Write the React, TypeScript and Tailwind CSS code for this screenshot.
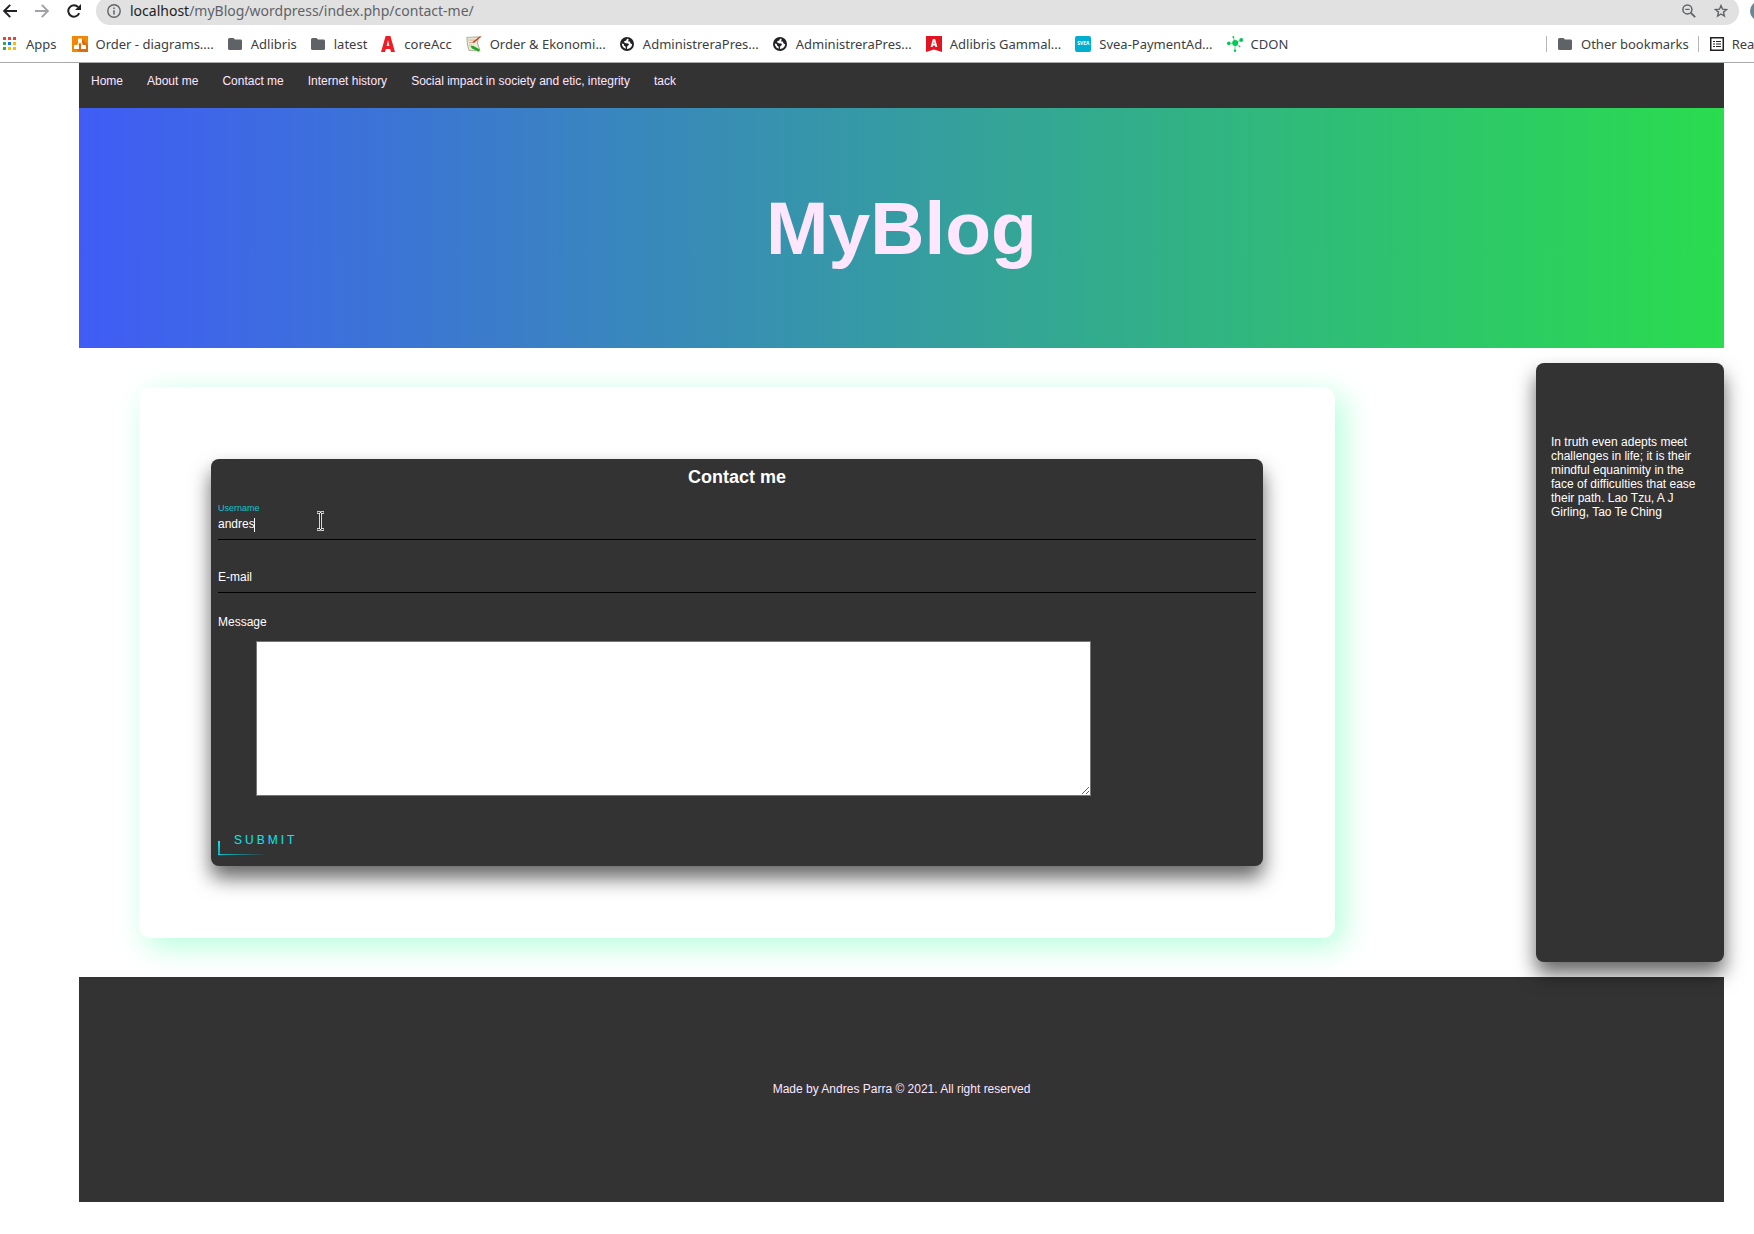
import type { ReactNode } from "react";

const ink = "#5f6368";

function Folder() {
  return (
    <svg width="14" height="12" viewBox="0 0 14 12" fill={ink}>
      <path d="M1.5 0H5.5L7 1.6H12.5A1.5 1.5 0 0 1 14 3V10.5A1.5 1.5 0 0 1 12.5 12H1.5A1.5 1.5 0 0 1 0 10.5V1.5A1.5 1.5 0 0 1 1.5 0Z" />
    </svg>
  );
}

function AppsGrid() {
  const colors = ["#ea4335", "#ea4335", "#ea4335", "#34a853", "#1a73e8", "#fbbc04", "#34a853", "#fbbc04", "#fbbc04"];
  return (
    <svg width="14" height="14" viewBox="0 0 14 14" shapeRendering="crispEdges">
      {colors.map((c, i) => (
        <rect key={i} x={(i % 3) * 5} y={Math.floor(i / 3) * 5} width="3" height="3" fill={c} />
      ))}
    </svg>
  );
}

function Diagrams() {
  return (
    <svg width="16" height="16" viewBox="0 0 16 16">
      <rect width="16" height="16" fill="#f08705" />
      <path d="M10 3L16 9V16H8L3 12Z" fill="#df6c0c" />
      <path d="M8 5L4.5 11M8 5L11.5 11" stroke="#fff" strokeWidth="1.3" />
      <rect x="6" y="2.4" width="4" height="4" rx=".6" fill="#fff" />
      <rect x="2" y="9" width="5" height="4" rx=".6" fill="#fff" />
      <rect x="9" y="9" width="5" height="4" rx=".6" fill="#fff" />
    </svg>
  );
}

function RedA() {
  return (
    <svg width="14" height="16" viewBox="0 0 14 16" fill="#ee1c25" fillRule="evenodd">
      <path d="M4.6 0H9.4L14 16H10L9.2 13H4.8L4 16H0ZM7 4.2L5.6 10H8.4Z" />
    </svg>
  );
}

function Notes() {
  return (
    <svg width="16" height="16" viewBox="0 0 16 16">
      <path d="M.8 1.5L12.5.8L11.5 7L14 15L3 14.5L1.5 9Z" fill="#e9ead8" stroke="#9a9c84" strokeWidth=".8" />
      <path d="M2.5 4H9M3 6.5H7M3 9H6" stroke="#d9a98c" strokeWidth=".9" />
      <path d="M15.6.6L8.5 6.6L6.6 7.2L7.4 5.2L13.8.2Z" fill="#c8451f" />
      <path d="M4.5 10.2L7 9.8L13.8 13.4L12.6 15.6L6 12.4Z" fill="#1ea51e" />
    </svg>
  );
}

function Globe() {
  return (
    <svg width="14" height="14" viewBox="0 0 14 14">
      <circle cx="7" cy="7" r="7" fill="#202124" />
      <path
        d="M8.6 1.9C7.4 1.7 6.4 2.4 6.2 3.6L4.2 4.3C3.9 5.4 4.6 6.1 5.8 6.2L8.2 6.5C9.2 6.9 9 8 8.2 8.4L7.2 9.2L6.9 11.9C9.7 12 12 9.9 12.1 7.2L10.6 6.4L9.8 4.6H8.2ZM1.8 6.5C1.9 9 3.4 11 5.6 11.7L5.7 9.8L4 8.6L3.8 7.1Z"
        fill="#fff"
      />
    </svg>
  );
}

function RedFlag() {
  return (
    <svg width="16" height="16" viewBox="0 0 16 16">
      <path d="M0 0H16V16L8 13.6L0 16Z" fill="#e3131f" />
      <path d="M6.9 3H9.1L11.4 11H9.4L9 9.6H7L6.6 11H4.6ZM8 5.4L7.4 8H8.6Z" fill="#fff" fillRule="evenodd" />
    </svg>
  );
}

function Svea() {
  return (
    <span className="flex size-4 items-center justify-center rounded-xs bg-[#00aecf] text-[5px] leading-none font-bold text-white">
      SVEA
    </span>
  );
}

function Molecule() {
  return (
    <svg width="16" height="16" viewBox="0 0 16 16" fill="#0c5">
      <path d="M8 7L1.6 7.5M8 7L14 4M8 7L6.4 1M8 7V15M8 7L12.5 10.5" stroke="#0c5" strokeWidth=".7" />
      <circle cx="8.2" cy="7" r="3" />
      <circle cx="1.8" cy="7.4" r="1.8" />
      <circle cx="14.2" cy="4" r="1.9" />
      <circle cx="6.3" cy="1" r="1" />
      <circle cx="8" cy="14.8" r="1.2" />
      <circle cx="12.6" cy="10.4" r=".8" />
    </svg>
  );
}

function ReadingList() {
  return (
    <svg width="14" height="14" viewBox="0 0 14 14" fill="none" stroke="#202124">
      <rect x=".75" y=".75" width="12.5" height="12.5" strokeWidth="1.5" />
      <path d="M3 4.5H5M6 4.5H11M3 7H5M6 7H11M3 9.5H5M6 9.5H11" strokeWidth="1.2" />
    </svg>
  );
}

function Bookmark({ icon, gap = "gap-2", children }: { icon: ReactNode; gap?: string; children: ReactNode }) {
  return (
    <a href="#" className={"flex shrink-0 items-center whitespace-nowrap " + gap}>
      {icon}
      <span>{children}</span>
    </a>
  );
}

function BrowserBar() {
  return (
    <div className="overflow-hidden border-b border-[#a9abad] bg-white font-['Noto_Sans',sans-serif] text-[#3c4043]">
      <div className="flex h-[25px] items-start">
        <div className="flex h-[22px] shrink-0 items-center">
          <button aria-label="Back" className="ml-[3px]">
            <svg width="14" height="14" viewBox="0 0 14 14" fill="none" stroke="#202124" strokeWidth="1.9">
              <path d="M14 7H1.5M7.2 .8L1.2 7L7.2 13.2" />
            </svg>
          </button>
          <button aria-label="Forward" className="ml-[18px]">
            <svg width="14" height="14" viewBox="0 0 14 14" fill="none" stroke="#a0a2a5" strokeWidth="1.9">
              <path d="M0 7H12.5M6.8 .8L12.8 7L6.8 13.2" />
            </svg>
          </button>
          <button aria-label="Reload" className="ml-[18px]">
            <svg width="14" height="14" viewBox="0 0 14 14" fill="none" stroke="#202124" strokeWidth="2">
              <path d="M12.2 9.2A5.7 5.7 0 1 1 11.2 3.1" />
              <path d="M14 0V6H8Z" fill="#202124" stroke="none" />
            </svg>
          </button>
        </div>
        <div className="-mt-[3px] ml-[15px] flex h-7 flex-1 items-start rounded-full bg-[#e1e1e1] px-[11px] pt-[3px]">
          <div className="flex h-[22px] flex-1 items-center gap-[9px]">
            <svg width="14" height="14" viewBox="0 0 14 14" fill="none" stroke={ink}>
              <circle cx="7" cy="7" r="6.2" strokeWidth="1.4" />
              <path d="M7 6.2V10.4M7 3.4V4.9" strokeWidth="1.5" />
            </svg>
            <p className="flex-1 text-[14px] leading-5 text-[#5f6368]">
              <span className="text-[#202124]">localhost</span>/myBlog/wordpress/index.php/contact-me/
            </p>
            <button aria-label="Zoom">
              <svg width="14" height="14" viewBox="0 0 14 14" fill="none" stroke={ink}>
                <circle cx="5.4" cy="5.4" r="4.5" strokeWidth="1.5" />
                <path d="M3.2 5.4H7.6" strokeWidth="1.2" />
                <path d="M8.8 8.8L13.2 13.2" strokeWidth="1.8" />
              </svg>
            </button>
            <button aria-label="Bookmark this page" className="ml-[9px]">
              <svg width="14" height="14" viewBox="0 0 14 14" fill="none" stroke={ink} strokeWidth="1.4">
                <path d="M7 1.6L8.5 5.2L12.6 5.5L9.5 8.1L10.4 12.1L7 10L3.6 12.1L4.5 8.1L1.4 5.5L5.5 5.2Z" />
              </svg>
            </button>
          </div>
        </div>
        <div className="ml-[11px] w-1 shrink-0">
          <div className="mt-[1px] size-5 rounded-full bg-[#6d8594]" />
        </div>
      </div>
      <div className="flex h-[37px] items-center pl-[3px] text-[13px] leading-5">
        <Bookmark icon={<AppsGrid />} gap="gap-[9px]">Apps</Bookmark>
        <div className="ml-[15px] flex items-center gap-3.5">
          <Bookmark icon={<Diagrams />}>Order - diagrams....</Bookmark>
          <Bookmark icon={<Folder />} gap="gap-[9px]">Adlibris</Bookmark>
          <Bookmark icon={<Folder />} gap="gap-[9px]">latest</Bookmark>
          <Bookmark icon={<RedA />} gap="gap-[9px]">coreAcc</Bookmark>
          <Bookmark icon={<Notes />}>Order &amp; Ekonomi...</Bookmark>
          <Bookmark icon={<Globe />} gap="gap-[9px]">AdministreraPres...</Bookmark>
          <Bookmark icon={<Globe />} gap="gap-[9px]">AdministreraPres...</Bookmark>
          <Bookmark icon={<RedFlag />}>Adlibris Gammal...</Bookmark>
          <Bookmark icon={<Svea />}>Svea-PaymentAd...</Bookmark>
          <Bookmark icon={<Molecule />}>CDON</Bookmark>
        </div>
        <div className="ml-auto flex w-[208px] shrink-0 items-center">
          <div className="h-4 w-px shrink-0 bg-[#b4b6b8]" />
          <div className="ml-[11px]">
            <Bookmark icon={<Folder />} gap="gap-[9px]">Other bookmarks</Bookmark>
          </div>
          <div className="ml-[9px] h-4 w-px shrink-0 bg-[#b4b6b8]" />
          <div className="ml-[11px]">
            <Bookmark icon={<ReadingList />} gap="gap-2">Rea</Bookmark>
          </div>
        </div>
      </div>
    </div>
  );
}

const navItems = ["Home", "About me", "Contact me", "Internet history", "Social impact in society and etic, integrity", "tack"];

function Field({ id, label, value, active, type }: { id: string; label: string; value?: string; active?: boolean; type: string }) {
  return (
    <div className="relative">
      <input
        id={id}
        type={type}
        defaultValue={value}
        className="mb-[22px] block h-[31px] w-full border-b border-black bg-transparent text-[12px] text-white outline-none"
      />
      <label
        htmlFor={id}
        className={
          active
            ? "absolute -top-[9px] left-0 text-[9px] leading-4 text-[#03e9f4]/80"
            : "absolute top-[5px] left-0 text-[12px] leading-5"
        }
      >
        {label}
      </label>
      {active && (
        <>
          <span className="absolute top-[9px] left-9 h-3.5 w-px bg-white" />
          <svg className="absolute top-px left-[98px]" width="9" height="22" viewBox="0 0 9 22" fill="none">
            <path d="M1 2.5H3.5L4.5 3.5L5.5 2.5H8M4.5 3V19M1 19.5H3.5L4.5 18.5L5.5 19.5H8" stroke="#fff" strokeWidth="2.6" />
            <path d="M1.5 2.5H3.5L4.5 3.5L5.5 2.5H7.5M4.5 3V19M1.5 19.5H3.5L4.5 18.5L5.5 19.5H7.5" stroke="#222" strokeWidth="1" />
          </svg>
        </>
      )}
    </div>
  );
}

export default function App() {
  return (
    <div className="min-h-screen overflow-x-hidden bg-white font-['Liberation_Sans',sans-serif] text-[12px] leading-[14px] text-white">
      <BrowserBar />
      <div className="mr-[30px] ml-[79px]">
        <nav className="h-[45px] bg-[#333]">
          <ul className="flex gap-6 px-3 pt-[11px]">
            {navItems.map((item) => (
              <li key={item}>
                <a href="#" className="text-[#ffe6ff]">{item}</a>
              </li>
            ))}
          </ul>
        </nav>
        <header className="flex h-[240px] items-center justify-center bg-[linear-gradient(90deg,#405cf5,#2adc4e)]">
          <h1 className="text-[75px] leading-[86px] font-bold text-[#ffe6ff]">MyBlog</h1>
        </header>
        <div className="flex items-start">
          <main className="mt-[39px] mr-[201px] mb-[39px] ml-[60px] flex-1 rounded-xl bg-white p-18 shadow-[8px_8px_30px_#b1ffdb]">
            <form className="rounded-lg bg-[#333] px-[7px] pt-[9px] pb-[11px] shadow-[0_12px_20px_rgba(0,0,0,0.6)]">
              <h2 className="mb-[21px] text-center text-[18px] leading-[18px] font-bold">Contact me</h2>
              <div className="pt-0.5">
                <Field id="username" type="text" label="Username" value="andres" active />
                <Field id="email" type="email" label="E-mail" />
              </div>
              <label htmlFor="message" className="block leading-[14px]">Message</label>
              <textarea id="message" className="mt-3 ml-[38px] block h-[155px] w-[835px] max-w-full border border-[#767676] bg-white text-black" />
              <button type="button" className="relative mt-[37px] block px-4 pb-2 text-[12px] leading-[14px] tracking-[3px] text-[#03e9f4]">
                SUBMIT
                <span className="absolute bottom-0 left-0 h-3.5 w-0.5 bg-linear-to-t from-[#03e9f4]/60 to-[#03e9f4]" />
                <span className="absolute bottom-0 left-0 h-px w-12 bg-linear-to-r from-[#03e9f4]/80 to-transparent" />
              </button>
            </form>
          </main>
          <aside className="mt-[15px] mb-[15px] h-[599px] w-[188px] rounded-lg bg-[#333] px-[15px] pt-[72px] shadow-[0_12px_20px_rgba(0,0,0,0.6)]">
            <p>In truth even adepts meet challenges in life; it is their mindful equanimity in the face of difficulties that ease their path. Lao Tzu, A J Girling, Tao Te Ching</p>
          </aside>
        </div>
        <footer className="flex h-[225px] items-center justify-center bg-[#333] pb-0.5">
          <p className="text-[#ffe6ff]">Made by Andres Parra © 2021. All right reserved</p>
        </footer>
      </div>
    </div>
  );
}
